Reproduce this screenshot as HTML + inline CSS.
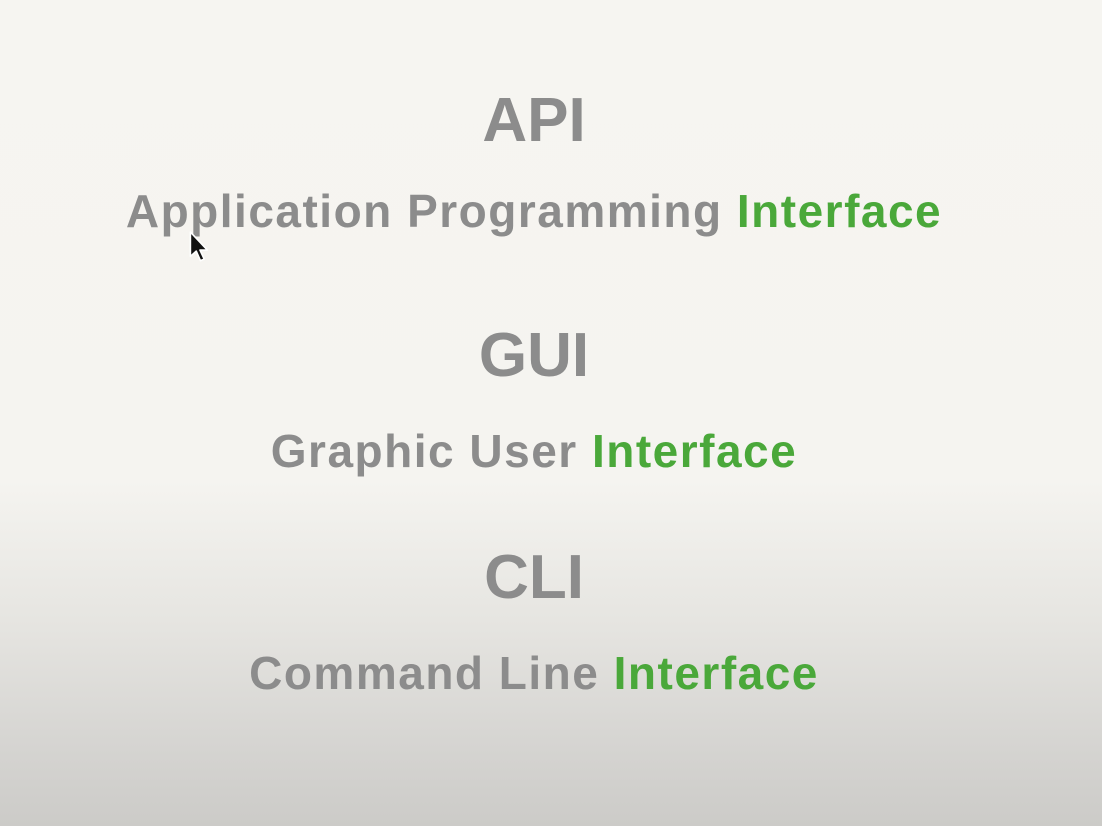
<!DOCTYPE html>
<html><head><style>
html,body{margin:0;padding:0}
body{width:1102px;height:826px;overflow:hidden;position:relative;
background:linear-gradient(to bottom,#f6f5f1 0px,#f5f4f0 480px,#e6e5e1 620px,#d6d5d2 740px,#cccbc8 826px);
font-family:"Liberation Sans",sans-serif;font-weight:bold;color:#8c8c8c}
.t{position:absolute;left:0;width:1068px;text-align:center;line-height:1;white-space:nowrap}
.h{font-size:62px}
.s{font-size:46px;letter-spacing:1.5px}
.g{color:#4aa83a}
</style></head><body>
<div class="t h" style="top:90px">API</div>
<div class="t s" style="top:188px">Application Programming <span class="g">Interface</span></div>
<div class="t h" style="top:325px">GUI</div>
<div class="t s" style="top:428px">Graphic User <span class="g">Interface</span></div>
<div class="t h" style="top:547px">CLI</div>
<div class="t s" style="top:650px">Command Line <span class="g">Interface</span></div>
<svg style="position:absolute;left:188px;top:231px" width="26" height="36" viewBox="0 0 24 34">
<path d="M2 1 L2 24 L7.5 19 L11.5 28 L15 26.5 L11 18 L18 18 Z" fill="#111" stroke="#fff" stroke-width="1.5" stroke-linejoin="round"/>
</svg>
</body></html>
